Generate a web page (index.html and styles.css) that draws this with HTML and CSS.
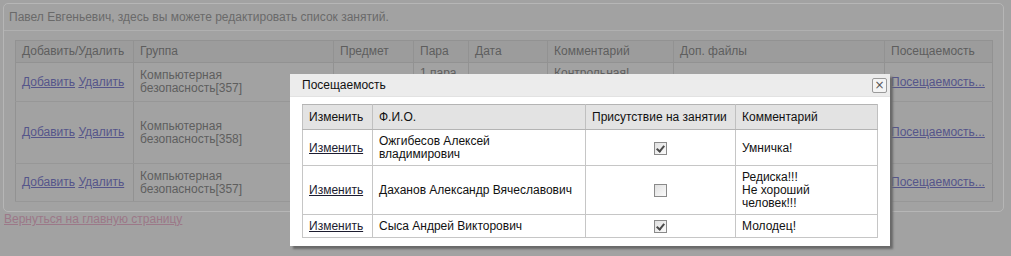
FILE: index.html
```html
<!DOCTYPE html>
<html lang="ru">
<head>
  <meta charset="UTF-8" />
  <title>Занятия</title>
  <link rel="stylesheet" href="styles.css">
</head>
<body>

  <!-- Основная панель -->
  <div class="panel">
    <div class="panel-head">Павел Евгеньевич, здесь вы можете редактировать список занятий.</div>
    <table class="lessons">
      <tr>
        <th class="c-act">Добавить/Удалить</th>
        <th class="c-group">Группа</th>
        <th class="c-subj">Предмет</th>
        <th class="c-pair">Пара</th>
        <th class="c-date">Дата</th>
        <th class="c-comm">Комментарий</th>
        <th class="c-files">Доп. файлы</th>
        <th class="c-att">Посещаемость</th>
      </tr>
      <tr class="r1">
        <td><a href="#">Добавить</a> <a href="#">Удалить</a></td>
        <td>Компьютерная безопасность[357]</td>
        <td>Сети</td>
        <td class="top">1 пара</td>
        <td>12.04.2011</td>
        <td class="top">Контрольная!</td>
        <td></td>
        <td><a href="#">Посещаемость...</a></td>
      </tr>
      <tr class="r2">
        <td><a href="#">Добавить</a> <a href="#">Удалить</a></td>
        <td>Компьютерная безопасность[358]</td>
        <td>Сети</td>
        <td>2 пара</td>
        <td>12.04.2011</td>
        <td></td>
        <td></td>
        <td><a href="#">Посещаемость...</a></td>
      </tr>
      <tr class="r3">
        <td><a href="#">Добавить</a> <a href="#">Удалить</a></td>
        <td>Компьютерная безопасность[357]</td>
        <td>Сети</td>
        <td>3 пара</td>
        <td>13.04.2011</td>
        <td></td>
        <td></td>
        <td><a href="#">Посещаемость...</a></td>
      </tr>
    </table>
  </div>
  <a class="back" href="#">Вернуться на главную страницу</a>

  <!-- Окно посещаемости -->
  <div class="dialog">
    <div class="dialog-title">
      <span>Посещаемость</span>
      <button class="dialog-close">&#215;</button>
    </div>
    <div class="dialog-body">
      <table class="attend">
        <tr>
          <th class="a-edit">Изменить</th>
          <th class="a-name">Ф.И.О.</th>
          <th class="a-here">Присутствие на занятии</th>
          <th class="a-comm">Комментарий</th>
        </tr>
        <tr>
          <td><a href="#">Изменить</a></td>
          <td>Ожгибесов Алексей<br>владимирович</td>
          <td class="mid"><span class="check on"></span></td>
          <td>Умничка!</td>
        </tr>
        <tr>
          <td><a href="#">Изменить</a></td>
          <td>Даханов Александр Вячеславович</td>
          <td class="mid"><span class="check"></span></td>
          <td>Редиска!!!<br>Не хороший<br>человек!!!</td>
        </tr>
        <tr>
          <td><a href="#">Изменить</a></td>
          <td>Сыса Андрей Викторович</td>
          <td class="mid"><span class="check on"></span></td>
          <td>Молодец!</td>
        </tr>
      </table>
    </div>
  </div>

</body>
</html>
```

FILE: styles.css
```css
body {
  margin: 0;
  padding: 3px 7px 0 3px;
  background-color: #a2a2a2;
  color: #5e5e5e;
  font-family: "Liberation Sans", Arial, sans-serif;
  font-size: 12px;
  line-height: 13px;
  height: 256px;
  box-sizing: border-box;
  overflow: hidden;
}

a {
  color: #55558a;
}

.panel {
  border: 1px solid #b6b6b6;
  border-radius: 5px;
  padding: 0 10px 9px 11px;
}

.panel-head {
  margin: 0 -10px 9px -11px;
  padding: 7px 5px 6px;
  border-bottom: 1px solid #b0b0b0;
  color: #6a6a6a;
}

.lessons {
  width: 100%;
  border-collapse: collapse;
  table-layout: fixed;
  border: 1px solid #8e8e8e;
}

.lessons th,
.lessons td {
  border: 1px solid #929292;
  text-align: left;
  padding: 2px 6px;
}

.lessons th {
  font-weight: normal;
  background-color: #9c9c9c;
  height: 17px;
}

.lessons td {
  border-color: #979797 #929292;
}

.lessons td.top {
  vertical-align: top;
  padding-top: 4px;
}

.lessons .r1 td { height: 32px; }
.lessons .r2 td { height: 57px; }
.lessons .r3 td { height: 33px; }

.c-act { width: 105px; }
.c-group { width: 187px; }
.c-subj { width: 67px; }
.c-pair { width: 42px; }
.c-date { width: 66px; }
.c-comm { width: 113px; }
.c-files { width: 198px; }

.back {
  display: inline-block;
  margin-top: 1px;
  margin-left: 1px;
  color: #9c7888;
}

.dialog {
  position: absolute;
  left: 290px;
  top: 74px;
  width: 600px;
  height: 172px;
  background-color: #fff;
  box-shadow: 3px 3px 2px #6a6a6a;
  color: #111;
}

.dialog-title {
  display: flex;
  align-items: center;
  justify-content: space-between;
  height: 22px;
  padding: 0 3px 0 12px;
  background-color: #ececec;
  border-bottom: 1px solid #e2e2e2;
}

.dialog-close {
  width: 15px;
  height: 15px;
  padding: 0;
  border: 1px solid #9a9a9a;
  border-radius: 2px;
  background-color: #f4f4f4;
  color: #555;
  font-family: "DejaVu Sans", sans-serif;
  font-size: 12px;
  line-height: 12px;
}

.dialog-body {
  padding: 7px 12px 0 12px;
}

.attend {
  width: 576px;
  border-collapse: collapse;
  table-layout: fixed;
  border: 1px solid #a0a0a0;
  line-height: 13px;
}

.attend th,
.attend td {
  border: 1px solid #c6c6c6;
  text-align: left;
  padding: 5px 6px 4px;
}

.attend th {
  font-weight: normal;
  background-color: #e3e3e3;
  padding: 6px 6px 5px;
  border-color: #b4b4b4 #c0c0c0;
}

.attend a {
  color: #1c1c30;
}

.attend td.mid {
  text-align: center;
}

.a-edit { width: 57px; }
.a-name { width: 200px; }
.a-here { width: 137px; }

.check {
  display: inline-block;
  width: 11px;
  height: 11px;
  border: 1px solid #8a8a8a;
  background: linear-gradient(135deg, #e0e0e0, #fbfbfb);
  vertical-align: middle;
  position: relative;
}

.check.on::after {
  content: "";
  position: absolute;
  left: 3px;
  top: 1px;
  width: 3px;
  height: 6px;
  border: solid #4a4a4a;
  border-width: 0 2px 2px 0;
  transform: rotate(40deg);
}
```
